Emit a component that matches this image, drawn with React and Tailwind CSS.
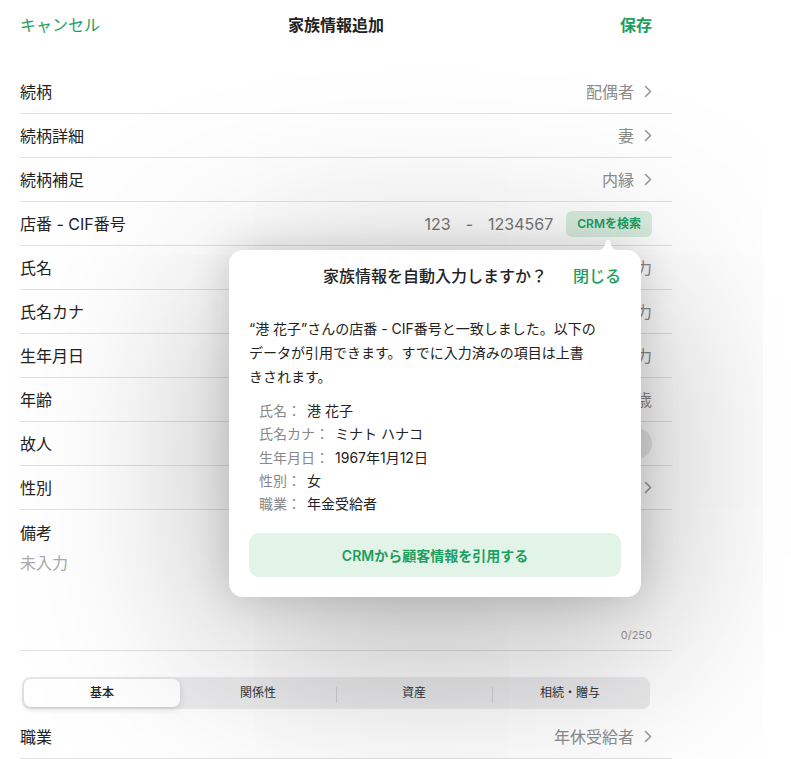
import React from 'react';

const font = { fontFamily: 'Inter, "Noto Sans CJK JP", sans-serif' };

const Chevron = () => (
  <svg width="8" height="13" viewBox="0 0 8 13" className="ml-[10px] shrink-0">
    <path d="M1.5 1.5 L6.5 6.5 L1.5 11.5" fill="none" stroke="#9a9a9a" strokeWidth="1.6" strokeLinecap="round" strokeLinejoin="round" />
  </svg>
);

const Row = ({ label, children }) => (
  <div className="flex h-11 items-center justify-between border-b border-[#e2e2e2] pr-5">
    <span className="text-[16px] text-[#222]">{label}</span>
    <div className="flex items-center text-[16px] text-[#8c8c8c]">{children}</div>
  </div>
);

const details = [
  ['氏名', '港 花子'],
  ['氏名カナ', 'ミナト ハナコ'],
  ['生年月日', '1967年1月12日'],
  ['性別', '女'],
  ['職業', '年金受給者'],
];

const tabs = ['基本', '関係性', '資産', '相続・贈与'];

export default function App() {
  return (
    <div className="relative h-[759px] w-[791px] overflow-hidden bg-white" style={font}>
      <div className="w-[672px]">
        <div className="grid h-[50px] grid-cols-[1fr_auto_1fr] items-center px-5">
          <span className="text-[16px] text-[#1e9e5e]">キャンセル</span>
          <span className="text-[16px] font-semibold text-[#222]">家族情報追加</span>
          <span className="justify-self-end text-[16px] font-semibold text-[#1e9e5e]">保存</span>
        </div>

        <div className="pl-5">
          <div className="mt-5">
            <Row label="続柄">配偶者<Chevron /></Row>
            <Row label="続柄詳細">妻<Chevron /></Row>
            <Row label="続柄補足">内縁<Chevron /></Row>
            <Row label="店番 - CIF番号">
              <span className="text-[#777]">123</span>
              <span className="mx-[15px] text-[#777]">-</span>
              <span className="text-[#777]">1234567</span>
              <span className="ml-[13px] rounded-md bg-[#d8eee0] px-[11px] py-[4px] text-[12px] font-semibold text-[#1e9e5e]">CRMを検索</span>
            </Row>
            <Row label="氏名">未入力</Row>
            <Row label="氏名カナ">未入力</Row>
            <Row label="生年月日">未入力</Row>
            <Row label="年齢">歳</Row>
            <Row label="故人">
              <div className="flex h-[31px] w-[51px] items-center rounded-full bg-[#e9e9eb] p-[2px]">
                <div className="h-[27px] w-[27px] rounded-full bg-white shadow" />
              </div>
            </Row>
            <Row label="性別">未入力<Chevron /></Row>

            <div className="flex h-[141px] flex-col border-b border-[#e2e2e2] pr-5 pt-[11px]">
              <span className="text-[16px] text-[#222]">備考</span>
              <span className="mt-[6px] text-[16px] text-[#aaa]">未入力</span>
              <span className="mt-auto mb-[7px] self-end text-[11px] text-[#999]">0/250</span>
            </div>
          </div>

          <div className="mt-[26px] mb-[6px] mr-[22px] ml-[2px] flex h-8 items-center rounded-lg bg-[#ececee] p-[2px]">
            {tabs.map((t, i) => (
              <div key={t} className="relative flex h-full flex-1 items-center justify-center">
                {i === 0 ? (
                  <div className="flex h-full w-full items-center justify-center rounded-[7px] bg-white text-[12px] font-medium text-[#222] shadow-[0_2px_6px_rgba(0,0,0,0.15)]">{t}</div>
                ) : (
                  <span className="text-[12px] text-[#333]">{t}</span>
                )}
                {i >= 2 && <div className="absolute left-0 top-[8px] h-4 w-px bg-[#d2d2d4]" />}
              </div>
            ))}
          </div>

          <Row label="職業">年休受給者<Chevron /></Row>
        </div>
      </div>

      {/* popover */}
      <div className="absolute left-[229px] top-[250px] w-[412px] rounded-[14px] bg-white px-5 pb-5 pt-[14px] shadow-[0_0_40px_rgba(0,0,0,0.16),0_40px_200px_rgba(0,0,0,0.36)]">
        <svg width="26" height="12" viewBox="0 0 26 12" className="absolute -top-[11px] left-[366px]">
          <path d="M0 12 C6 12 9 10 11 3 C12 0 14 0 15 3 C17 10 20 12 26 12 Z" fill="#fff" />
        </svg>
        <div className="relative flex h-6 items-center justify-center">
          <span className="text-[16px] font-medium text-[#222]">家族情報を自動入力しますか？</span>
          <span className="absolute right-0 text-[16px] font-medium text-[#1e9e5e]">閉じる</span>
        </div>
        <p className="mt-[29px] text-[14px] leading-6 text-[#222]">
          “港 花子”さんの店番 - CIF番号と一致しました。以下の<br />
          データが引用できます。すでに入力済みの項目は上書<br />
          きされます。
        </p>
        <div className="mt-[10px] pl-[10px]">
          {details.map(([k, v]) => (
            <div key={k} className="flex h-[23.3px] items-center text-[14px]">
              <span className="text-[#888]">{k}：</span>
              <span className="ml-[6px] text-[#222]">{v}</span>
            </div>
          ))}
        </div>
        <button className="mt-[18px] flex h-11 w-full items-center justify-center rounded-[10px] bg-[#e2f4e8] text-[14px] font-semibold text-[#1e9e5e]">
          CRMから顧客情報を引用する
        </button>
      </div>
    </div>
  );
}
